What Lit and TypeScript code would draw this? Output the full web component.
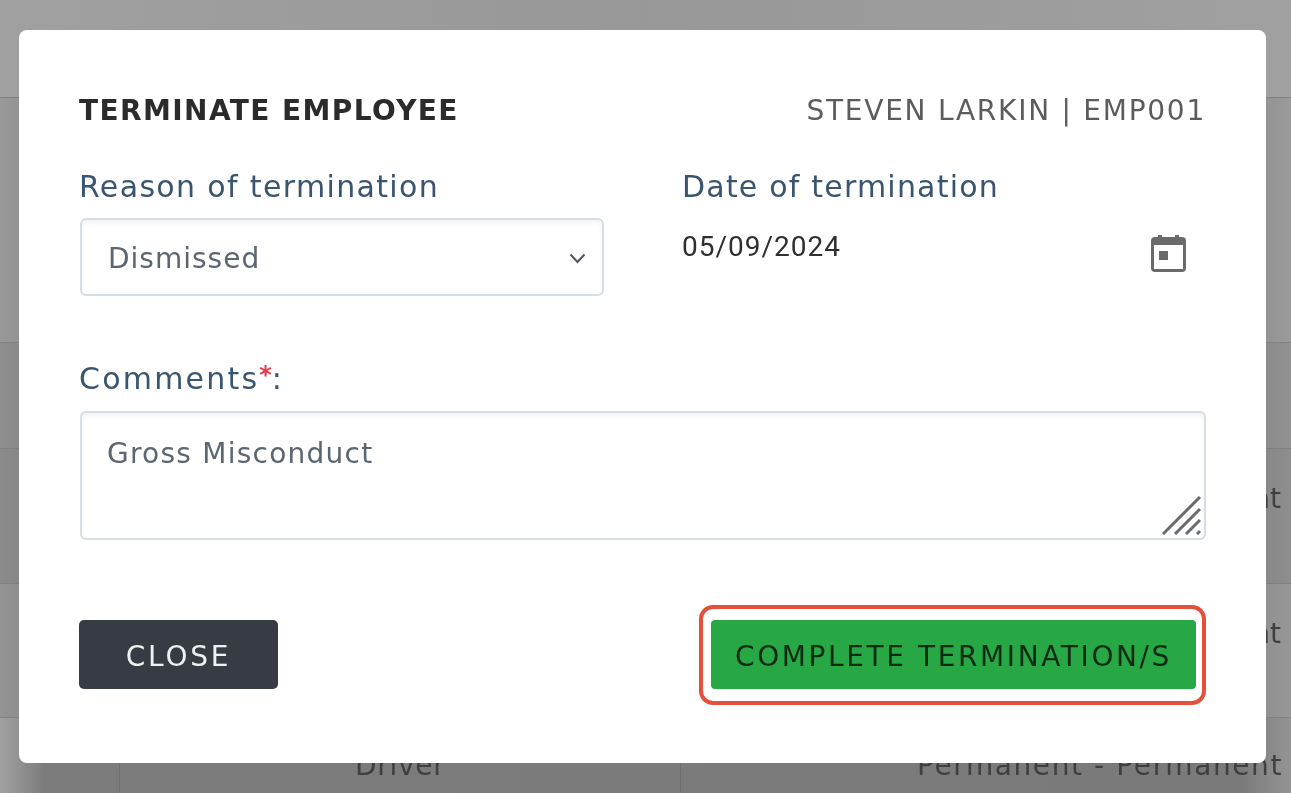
import { LitElement, html, css } from "lit";
import { customElement } from "lit/decorators.js";

@customElement("app-root")
export class AppRoot extends LitElement {
  static styles = css`
    :host { display: block; width: 1291px; height: 793px; overflow: hidden; position: relative; background: #999; font-family: "DejaVu Sans", Inter, sans-serif; }
    .stage { position: absolute; inset: 0; filter: blur(0.6px); }
    .backdrop { position: absolute; inset: 0; display: flex; flex-direction: column; }
    .band { border-bottom: 1px solid #808080; box-sizing: border-box; flex: none; position: relative; }
    .b0 { height: 98px; background: linear-gradient(90deg, #a0a0a0, #989898 50%, #a0a0a0); }
    .b1 { height: 245px; background: linear-gradient(90deg, #999, #939393 19px, #939393 1266px, #9a9a9a); }
    .b2 { height: 106px; background: linear-gradient(90deg, #8e8e8e, #8a8a8a 19px, #8c8c8c 1266px, #919191); }
    .b3 { height: 135px; background: linear-gradient(90deg, #8b8b8b, #878787 19px, #888 1266px, #8e8e8e); }
    .b4 { height: 134px; background: linear-gradient(90deg, #949494, #8e8e8e 19px, #909090 1266px, #979797); }
    .b5 { flex: 1; border-bottom: 0; background: linear-gradient(90deg, #a2a2a2 0, #7c7c7c 44px, #7a7a7a 1240px, #949494 100%); }
    .vline { position: absolute; left: 119px; top: 0; bottom: 0; width: 1px; background: #6e6e6e; }
    .vline.r { left: 680px; }
    .ghost { position: absolute; font-size: 28px; color: #3f3f3f; white-space: nowrap; }
    .driver { left: 355px; top: 31px; letter-spacing: 0.7px; }
    .perm { right: 8px; top: 31px; letter-spacing: 1.6px; }
    .nt { right: 10px; top: 33px; }

    .modal { position: absolute; left: 19px; top: 30px; width: 1247px; height: 733px; box-sizing: border-box; background: #fff; border-radius: 8px; padding: 60px 60px 0 60px; display: flex; flex-direction: column; }
    .head { display: flex; justify-content: space-between; align-items: center; height: 40px; }
    .title { font-size: 28px; font-weight: 700; color: #2b2b2b; letter-spacing: 1.4px; white-space: nowrap; }
    .sub { font-size: 28px; color: #5c5c5c; letter-spacing: 1.75px; white-space: nowrap; }
    .row { display: grid; grid-template-columns: 525px 1fr; column-gap: 78px; margin-top: 39px; }
    .label { font-size: 30px; color: #3a5570; line-height: 36px; letter-spacing: 1.35px; white-space: nowrap; }
    .label.dt { letter-spacing: 1.2px; }
    .select { margin: 13px 0 0 1px; height: 78px; width: 524px; box-sizing: border-box; border: 2px solid #d5dde5; border-radius: 6px; display: flex; align-items: center; justify-content: space-between; padding: 2px 16px 0 26px; font-size: 28px; letter-spacing: 1px; color: #5c6670; box-shadow: inset 0 3px 4px rgba(0,0,0,0.05); }
    .date { display: flex; justify-content: space-between; padding: 0 20px 0 0; margin-top: 25px; font-family: Roboto, sans-serif; font-size: 28px; color: #2f2f2f; letter-spacing: 1px; }
    .cal { margin-top: 5px; }
    .comments { margin-top: 65px; letter-spacing: 2.2px; }
    .req { color: #e33b4e; font-size: 24px; font-weight: 700; position: relative; top: -6px; letter-spacing: 0; }
    .textarea { position: relative; margin: 12px 0 0 1px; height: 129px; box-sizing: border-box; border: 2px solid #d5dde5; border-radius: 6px; padding: 24px 25px 0; font-size: 28px; letter-spacing: 1.25px; color: #5c6670; box-shadow: inset 0 3px 4px rgba(0,0,0,0.05); white-space: nowrap; }
    .grip { position: absolute; right: 0; bottom: 3px; }
    .foot { display: flex; justify-content: space-between; align-items: flex-start; margin-top: 64px; }
    .close { width: 199px; height: 69px; margin-top: 16px; padding-top: 3px; box-sizing: border-box; border-radius: 5px; background: #373b43; color: #f0f0f0; display: flex; align-items: center; justify-content: center; font-size: 28px; letter-spacing: 2.8px; }
    .hl { width: 507px; height: 100px; margin-top: 1px; box-sizing: border-box; border: 4px solid #e5503c; border-radius: 14px; display: flex; align-items: flex-start; justify-content: center; background: #fff; padding: 11px 0 0 2px; }
    .go { width: 485px; height: 69px; padding-top: 3px; box-sizing: border-box; border-radius: 4px; background: #28a745; color: #0d2a14; display: flex; align-items: center; justify-content: center; font-size: 28px; letter-spacing: 2.6px; white-space: nowrap; }
  `;

  render() {
    return html`
      <div class="stage">
        <div class="backdrop">
          <div class="band b0"></div>
          <div class="band b1"></div>
          <div class="band b2"></div>
          <div class="band b3"><div class="ghost nt">Permanent</div></div>
          <div class="band b4"><div class="ghost nt">Permanent</div></div>
          <div class="band b5">
            <div class="vline"></div>
            <div class="vline r"></div>
            <div class="ghost driver">Driver</div>
            <div class="ghost perm">Permanent - Permanent</div>
          </div>
        </div>
        <div class="modal">
          <div class="head">
            <div class="title">TERMINATE EMPLOYEE</div>
            <div class="sub">STEVEN LARKIN | EMP001</div>
          </div>
          <div class="row">
            <div>
              <div class="label">Reason of termination</div>
              <div class="select">
                <span>Dismissed</span>
                <svg width="17" height="11" viewBox="0 0 17 11" fill="none" stroke="#4d5560" stroke-width="2"><path d="M1.5 1.5 8.5 9l7-7.5"/></svg>
              </div>
            </div>
            <div>
              <div class="label dt">Date of termination</div>
              <div class="date">
                <span>05/09/2024</span>
                <svg class="cal" width="35" height="37" viewBox="0 0 35 37" fill="#6a6a6a"><path d="M7 0h4v2h13V0h4v2h3a4 4 0 0 1 4 4v27a4 4 0 0 1-4 4H4a4 4 0 0 1-4-4V6a4 4 0 0 1 4-4h3zM3 10v24h29V10z"/><rect x="8" y="16" width="9" height="9"/></svg>
              </div>
            </div>
          </div>
          <div class="label comments">Comments<span class="req">*</span>:</div>
          <div class="textarea">
            Gross Misconduct
            <svg class="grip" width="42" height="40" viewBox="0 0 42 40" stroke="#6b6b6b" stroke-width="3" fill="none"><path d="M1 39 38 2M13 39 38 14M24 39 38 25M35 39 38 36"/></svg>
          </div>
          <div class="foot">
            <div class="close">CLOSE</div>
            <div class="hl"><div class="go">COMPLETE TERMINATION/S</div></div>
          </div>
        </div>
      </div>
    `;
  }
}
